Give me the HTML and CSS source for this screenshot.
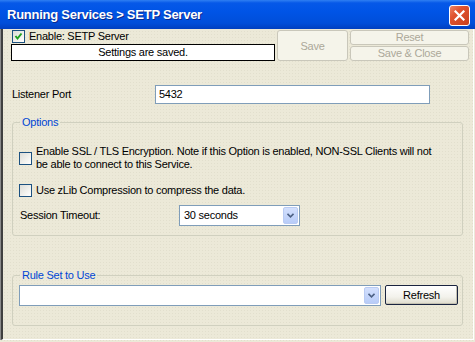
FILE: index.html
```html
<!DOCTYPE html>
<html lang="en">
<head>
<meta charset="UTF-8">
<title>Running Services &gt; SETP Server</title>
<link rel="stylesheet" href="styles.css">
</head>
<body>

<div class="window">

  <div class="titlebar">
    <span class="title">Running Services &gt; SETP Server</span>
    <span class="close">
      <svg width="11" height="11" viewBox="0 0 11 11"><path d="M1.5 1.5 L9.5 9.5 M9.5 1.5 L1.5 9.5" stroke="#fff" stroke-width="2.2" stroke-linecap="square"/></svg>
    </span>
  </div>

  <div class="panel">

    <div class="toolbar">
      <div class="status-col">
        <div class="check-row">
          <span class="box">
            <svg width="11" height="11" viewBox="0 0 11 11"><path d="M2.5 5 L4.5 7.5 L8.5 2.5" fill="none" stroke="#21a121" stroke-width="2"/></svg>
          </span>
          <span>Enable: SETP Server</span>
        </div>
        <div class="status">Settings are saved.</div>
      </div>
      <button class="btn save" disabled>Save</button>
      <div class="btn-col">
        <button class="btn" disabled>Reset</button>
        <button class="btn" disabled>Save &amp; Close</button>
      </div>
    </div>

    <div class="field-row">
      <span class="field-label">Listener Port</span>
      <div class="textbox">5432</div>
    </div>

    <fieldset class="group options">
      <legend>Options</legend>
      <div class="opt-row ssl">
        <span class="box"></span>
        <span>Enable SSL / TLS Encryption. Note if this Option is enabled, NON-SSL Clients will not<br>be able to connect to this Service.</span>
      </div>
      <div class="opt-row zlib">
        <span class="box"></span>
        <span>Use zLib Compression to compress the data.</span>
      </div>
      <div class="opt-row timeout">
        <span class="timeout-label">Session Timeout:</span>
        <div class="combo timeout-combo">
          <span class="combo-text">30 seconds</span>
          <span class="drop">
            <svg width="7" height="5" viewBox="0 0 7 5"><path d="M0.5 0.8 L3.5 3.8 L6.5 0.8" fill="none" stroke="#4d6185" stroke-width="1.6"/></svg>
          </span>
        </div>
      </div>
    </fieldset>

    <fieldset class="group rules">
      <legend>Rule Set to Use</legend>
      <div class="rule-row">
        <div class="combo rule-combo">
          <span class="combo-text"></span>
          <span class="drop">
            <svg width="7" height="5" viewBox="0 0 7 5"><path d="M0.5 0.8 L3.5 3.8 L6.5 0.8" fill="none" stroke="#4d6185" stroke-width="1.6"/></svg>
          </span>
        </div>
        <button class="btn refresh">Refresh</button>
      </div>
    </fieldset>

  </div>

</div>

</body>
</html>
```

FILE: styles.css
```css
body {
  margin: 0;
  font-family: "Liberation Sans", Arial, sans-serif;
  font-size: 11px;
  line-height: 13px;
  letter-spacing: -0.25px;
  color: #000;
  background-color: #ece9d8;
}

.window {
  width: 475px;
  height: 342px;
  display: flex;
  flex-direction: column;
  overflow: hidden;
  background-color: #ece9d8;
  background-image: radial-gradient(#e2dfcd 0.7px, transparent 0.8px);
  background-size: 3px 3px;
}

/* title bar */

.titlebar {
  flex: none;
  height: 29px;
  box-sizing: border-box;
  padding: 0 5px 0 7px;
  display: flex;
  align-items: center;
  justify-content: space-between;
  background: linear-gradient(#2f7ff2 0, #0658e8 3px, #0054e6 40%, #004ed9 80%, #003fbf 100%);
}

.title {
  color: #fff;
  font-size: 13px;
  line-height: 15px;
  font-weight: bold;
  text-shadow: 1px 1px #0c2a8c;
}

.close {
  width: 19px;
  height: 19px;
  margin-top: 1px;
  border: 1px solid #fff;
  border-radius: 3px;
  display: flex;
  align-items: center;
  justify-content: center;
  background: linear-gradient(135deg, #ec8466 0, #e0532f 35%, #c9401c 100%);
}

/* panel */

.panel {
  flex: 1;
  margin: 0 1px 2px 1px;
  padding-top: 1px;
  border-left: 2px solid #404040;
  border-right: 1px solid #fff;
  border-bottom: 1px solid #fff;
  box-shadow: -1px 0 #8c8c8c;
}

.toolbar {
  display: flex;
  height: 31px;
  padding-left: 8px;
}

.status-col {
  width: 264px;
  display: flex;
  flex-direction: column;
}

.check-row {
  height: 13px;
  display: flex;
  align-items: center;
  gap: 4px;
  padding-left: 1px;
}

.status {
  margin-top: 1px;
  height: 15px;
  border: 1px solid #000;
  background-color: #fff;
  text-align: center;
  line-height: 15px;
}

.box {
  flex: none;
  width: 11px;
  height: 11px;
  border: 1px solid #1c5180;
  background: linear-gradient(135deg, #dcdcd7 0, #f2f2ee 60%, #fff 100%);
  display: flex;
  align-items: center;
  justify-content: center;
}

.btn {
  font-family: inherit;
  font-size: 11px;
  letter-spacing: -0.25px;
  margin: 0;
  padding: 0;
  box-sizing: border-box;
  border: 1px solid #c9c7ba;
  border-radius: 3px;
  background-color: #f5f4ea;
  color: #aca899;
}

.save {
  width: 71px;
  height: 31px;
  margin-left: 2px;
}

.btn-col {
  width: 119px;
  margin-left: 2px;
  display: flex;
  flex-direction: column;
  gap: 1px;
}

.btn-col .btn {
  height: 15px;
  line-height: 13px;
}

/* listener port */

.field-row {
  display: flex;
  align-items: center;
  margin-top: 24px;
  padding-left: 9px;
}

.field-label {
  width: 143px;
}

.textbox {
  width: 275px;
  height: 19px;
  box-sizing: border-box;
  border: 1px solid #7f9db9;
  background-color: #fff;
  padding-left: 3px;
  line-height: 17px;
}

/* group boxes */

.group {
  margin: 12px 10px 0 9px;
  padding: 0 0 9px 6px;
  border: 1px solid #d0d0bf;
  border-radius: 3px;
  min-width: 0;
}

.group legend {
  color: #0046d5;
  padding: 0 2px;
  margin-left: 1px;
  line-height: 13px;
}

.opt-row {
  display: flex;
  align-items: center;
  gap: 4px;
}

.ssl {
  margin-top: 16px;
}

.zlib {
  margin-top: 13px;
}

.timeout {
  margin-top: 8px;
  gap: 0;
}

.timeout-label {
  width: 159px;
  padding-left: 1px;
}

.combo {
  box-sizing: border-box;
  height: 21px;
  border: 1px solid #7f9db9;
  background-color: #fff;
  display: flex;
  align-items: center;
  justify-content: space-between;
  padding: 1px;
}

.combo-text {
  padding-left: 3px;
}

.drop {
  width: 15px;
  height: 17px;
  box-sizing: border-box;
  border: 1px solid #b9cbf3;
  border-radius: 2px;
  background: linear-gradient(#d3e0fd, #b8ccf8);
  display: flex;
  align-items: center;
  justify-content: center;
}

.timeout-combo {
  width: 121px;
}

.rules {
  margin-top: 33px;
  padding-bottom: 19px;
}

.rule-row {
  display: flex;
  margin-top: 3px;
}

.rule-combo {
  width: 362px;
}

.refresh {
  width: 73px;
  height: 20px;
  margin-left: 4px;
  border: 1px solid #1a2440;
  border-radius: 2px;
  color: #000;
  background: linear-gradient(#fff, #f3f2ec 60%, #dedbcc);
  box-shadow: inset -1px -1px #c4c1b2;
}
```
